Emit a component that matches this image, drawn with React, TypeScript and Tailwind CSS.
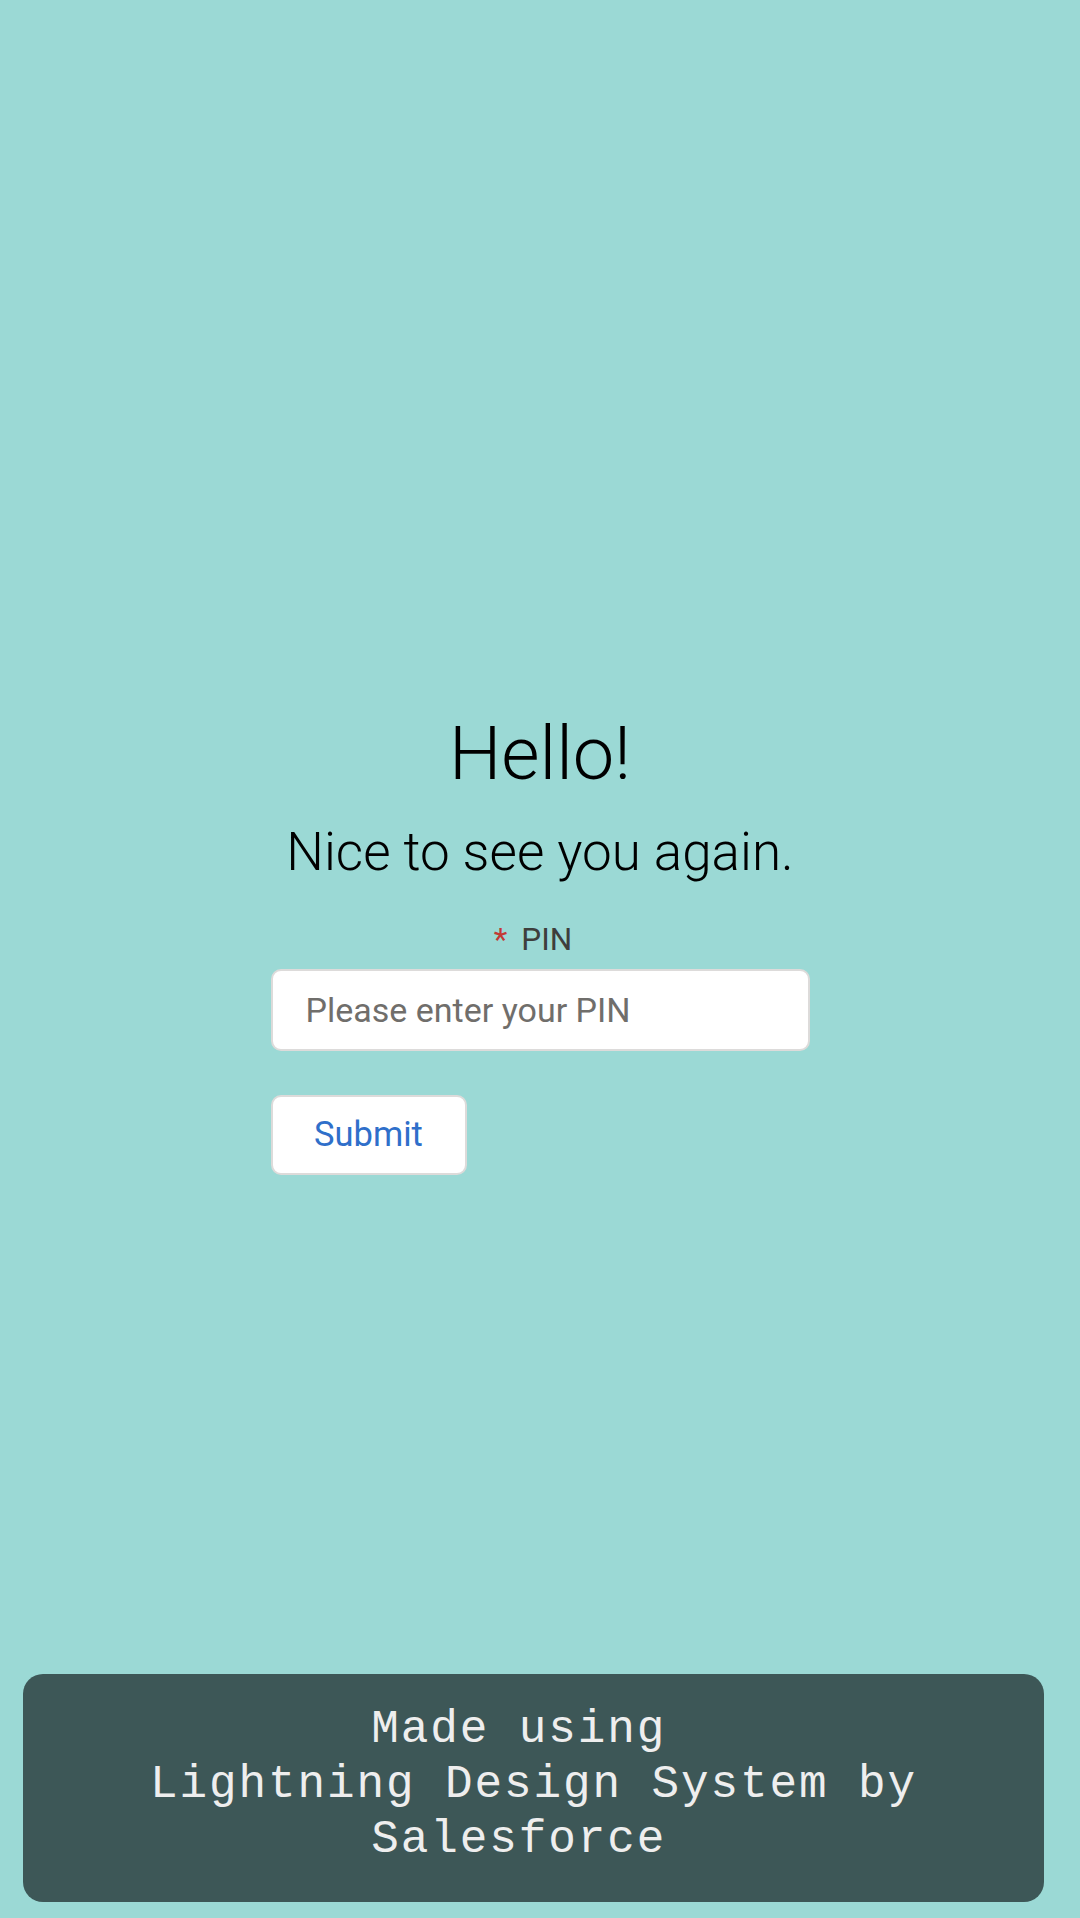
import React from "react";

export default function App() {
  return (
    <div className="min-h-[1918px] w-full bg-[#9bd9d5] flex flex-col" style={{ fontFamily: "Roboto, 'Liberation Sans', sans-serif" }}>
      <main className="flex-1 flex flex-col items-center pt-[717px]">
        <h1 className="text-[74px] leading-none font-light text-black">Hello!</h1>
        <p className="mt-[35px] text-[53px] leading-none font-light text-black">Nice to see you again.</p>
        <div className="mt-[45px] w-[539px] flex flex-col">
          <label className="self-center pr-[14px] text-[31.5px] leading-none text-[#3e3e3c] flex items-baseline">
            <span className="text-[#c23934] mr-[14px]">*</span>
            <span>PIN</span>
          </label>
          <input
            className="mt-[13px] h-[82px] w-full rounded-[10px] border-2 border-[#dddbda] bg-white px-[33px] text-[34px] text-[#3e3e3c] placeholder:text-[#706e6b] outline-none"
            placeholder="Please enter your PIN"
          />
          <div className="mt-[44px]">
            <button className="h-[80px] w-[196px] rounded-[10px] border-2 border-[#dddbda] bg-white text-[34.5px] text-[#2f6fca]">
              Submit
            </button>
          </div>
        </div>
      </main>
      <footer className="ml-[23px] mr-[36px] mb-[16px] h-[228px] rounded-[20px] bg-[#3d5757] pt-[29px] text-center text-[46px] leading-[55px] tracking-[1.9px] text-[#eeeeee]" style={{ fontFamily: "'Liberation Mono', 'DejaVu Sans Mono', monospace" }}>
        <span className="block">Made using{"\u00a0"}</span>
        <span className="block">Lightning Design System by</span>
        <span className="block">Salesforce{"\u00a0"}</span>
      </footer>
    </div>
  );
}
